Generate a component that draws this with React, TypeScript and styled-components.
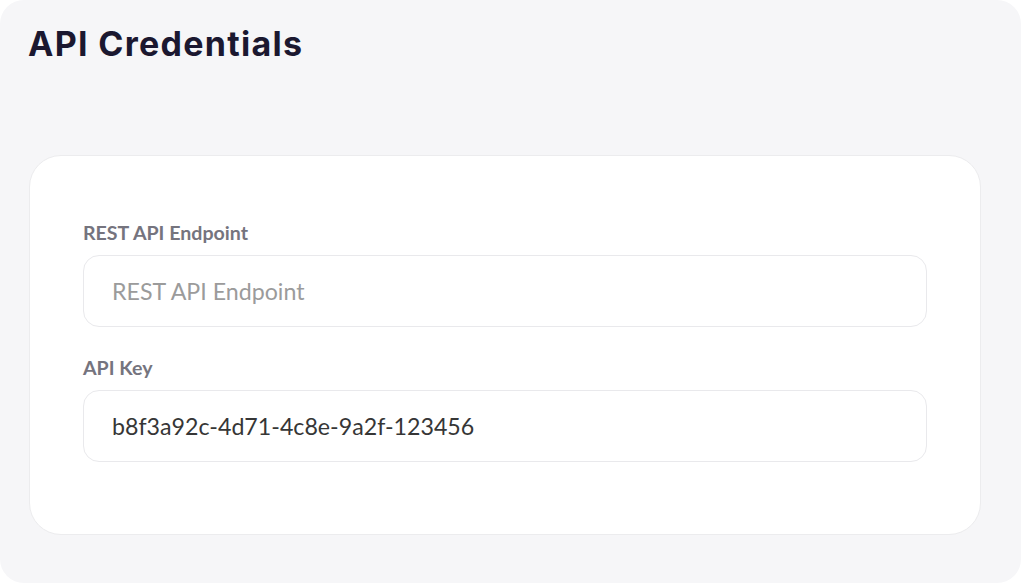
import React from 'react'
import styled, { createGlobalStyle } from 'styled-components'

const GlobalStyle = createGlobalStyle`
  html, body {
    margin: 0;
    padding: 0;
    background: #ffffff;
  }
  * {
    box-sizing: border-box;
  }
`

type Field = {
  label: string
  placeholder: string
  value?: string
}

const FIELDS: Field[] = [
  { label: 'REST API Endpoint', placeholder: 'REST API Endpoint' },
  { label: 'API Key', placeholder: 'API Key', value: 'b8f3a92c-4d71-4c8e-9a2f-123456' },
]

const App = () => {
  return (
    <>
      <GlobalStyle />
      <Panel>
        <Title>API Credentials</Title>
        <Card>
          {FIELDS.map((field) => (
            <FieldGroup key={field.label}>
              <Label>{field.label}</Label>
              <Input placeholder={field.placeholder} defaultValue={field.value} readOnly />
            </FieldGroup>
          ))}
        </Card>
      </Panel>
    </>
  )
}

const Panel = styled.section`
  width: 1021px;
  height: 583px;
  background: #f6f6f8;
  border-radius: 24px;
  padding: 24px 40px 49px 28px;
  display: flex;
  flex-direction: column;
`

const Title = styled.h1`
  margin: 0;
  font-family: Inter, 'Noto Sans', sans-serif;
  font-weight: 700;
  font-size: 34px;
  line-height: 40px;
  letter-spacing: 1.3px;
  color: #1b1830;
`

const Card = styled.div`
  margin: 91px 0 0 1px;
  background: #ffffff;
  border: 1px solid #ececee;
  border-radius: 32px;
  padding: 66px 53px 72px;
  display: flex;
  flex-direction: column;
  gap: 30px;
`

const FieldGroup = styled.div`
  display: flex;
  flex-direction: column;
  gap: 11px;
`

const Label = styled.label`
  font-family: Lato, 'Noto Sans', sans-serif;
  font-weight: 700;
  font-size: 19.6px;
  line-height: 22px;
  color: #75747e;
`

const Input = styled.input`
  width: 100%;
  height: 72px;
  border: 1px solid #e9e9ec;
  border-radius: 16px;
  background: #ffffff;
  padding: 0 28px;
  font-family: Lato, 'Noto Sans', sans-serif;
  font-size: 23.2px;
  color: #363636;
  outline: none;

  &::placeholder {
    color: #9b9b9b;
  }
`

export default App
